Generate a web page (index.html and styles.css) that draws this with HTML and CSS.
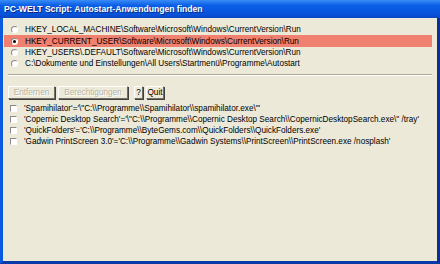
FILE: index.html
```html
<!DOCTYPE html>
<html lang="de">
<head>
	<meta charset="UTF-8">
	<title>PC-WELT Script</title>
	<link rel="stylesheet" href="styles.css">
</head>
<body>
	<div class="window">
		<div class="titlebar">PC-WELT Script: Autostart-Anwendungen finden</div>
		<div class="client">
			<div class="keys">
				<label class="opt"><span class="radio"></span>HKEY_LOCAL_MACHINE\Software\Microsoft\Windows\CurrentVersion\Run</label>
				<label class="opt sel"><span class="radio on"></span>HKEY_CURRENT_USER\Software\Microsoft\Windows\CurrentVersion\Run</label>
				<label class="opt"><span class="radio"></span>HKEY_USERS\.DEFAULT\Software\Microsoft\Windows\CurrentVersion\Run</label>
				<label class="opt"><span class="radio"></span>C:\Dokumente und Einstellungen\All Users\Startmenü\Programme\Autostart</label>
			</div>
			<div class="sep"></div>
			<div class="buttons">
				<span class="btn dis w1">Entfernen</span>
				<span class="btn dis w2">Berechtigungen</span>
				<span class="btn w3">?</span>
				<span class="btn w4">Quit</span>
			</div>
			<div class="entries">
				<label class="opt"><span class="check"></span>'Spamihilator'='\"C:\\Programme\\Spamihilator\\spamihilator.exe\"'</label>
				<label class="opt"><span class="check"></span>'Copernic Desktop Search'='\"C:\\Programme\\Copernic Desktop Search\\CopernicDesktopSearch.exe\" /tray'</label>
				<label class="opt"><span class="check"></span>'QuickFolders'='C:\\Programme\\ByteGems.com\\QuickFolders\\QuickFolders.exe'</label>
				<label class="opt"><span class="check"></span>'Gadwin PrintScreen 3.0'='C:\\Programme\\Gadwin Systems\\PrintScreen\\PrintScreen.exe /nosplash'</label>
			</div>
		</div>
	</div>
</body>
</html>
```

FILE: styles.css
```css
*{
	padding:0;
	margin:0;
	box-sizing:border-box;
}
body{
	width:440px;
	height:264px;
	overflow:hidden;
	font-family:"Liberation Sans", Arial, sans-serif;
	font-size:8.2px;
	color:#000;
}
.window{
	height:264px;
	display:flex;
	flex-direction:column;
	background:#0a4fd6;
}
.titlebar{
	height:18px;
	padding:4px 0 0 4px;
	color:#fff;
	font-weight:bold;
	font-size:8.6px;
	background:linear-gradient(#3a8cf5, #0a5fe6 30%, #0852da 80%, #0a45c0);
	text-shadow:1px 1px 0 #0a2a80;
}
.client{
	flex:1;
	background:#ece9d8;
	border-left:3px solid #0a5ae0;
	border-right:3px solid #0a2f9a;
	border-bottom:3px solid #0a3aa8;
	padding:6px 5px 0 1px;
}
.keys{
	display:flex;
	flex-direction:column;
}
.opt{
	display:flex;
	align-items:center;
	height:11px;
	padding-left:7px;
	white-space:nowrap;
}
.keys .opt.sel{
	height:12px;
	background:#f08070;
}
.radio{
	width:7px;
	height:7px;
	border-radius:50%;
	border:1px solid #8a8a8a;
	border-color:#8a8a8a #fff #fff #8a8a8a;
	background:#fff;
	margin-right:7px;
	display:flex;
	align-items:center;
	justify-content:center;
}
.radio.on::after{
	content:"";
	width:3px;
	height:3px;
	border-radius:50%;
	background:#000;
}
.sep{
	margin:5px 0 0 4px;
	border-top:1px solid #aca899;
	border-bottom:1px solid #fff;
}
.buttons{
	display:flex;
	margin:10px 0 0 4px;
	height:13px;
}
.btn{
	display:flex;
	align-items:center;
	justify-content:center;
	background:#ece9d8;
	border:1px solid #fff;
	border-right-color:#716f64;
	border-bottom-color:#716f64;
	box-shadow:1px 1px 0 #404040;
	margin-right:3px;
}
.btn.dis{
	color:#b8b4a4;
	text-shadow:1px 1px 0 #fff;
}
.w1{width:47px;}
.w2{width:70px; margin-right:6px;}
.w3{width:9px;}
.w4{width:18px;}
.entries{
	margin-top:4px;
	display:flex;
	flex-direction:column;
}
.entries .opt{
	padding-left:6px;
}
.check{
	width:7px;
	height:7px;
	border:1px solid #8a8a8a;
	border-color:#8a8a8a #fff #fff #8a8a8a;
	background:#fff;
	margin-right:7px;
}
```
